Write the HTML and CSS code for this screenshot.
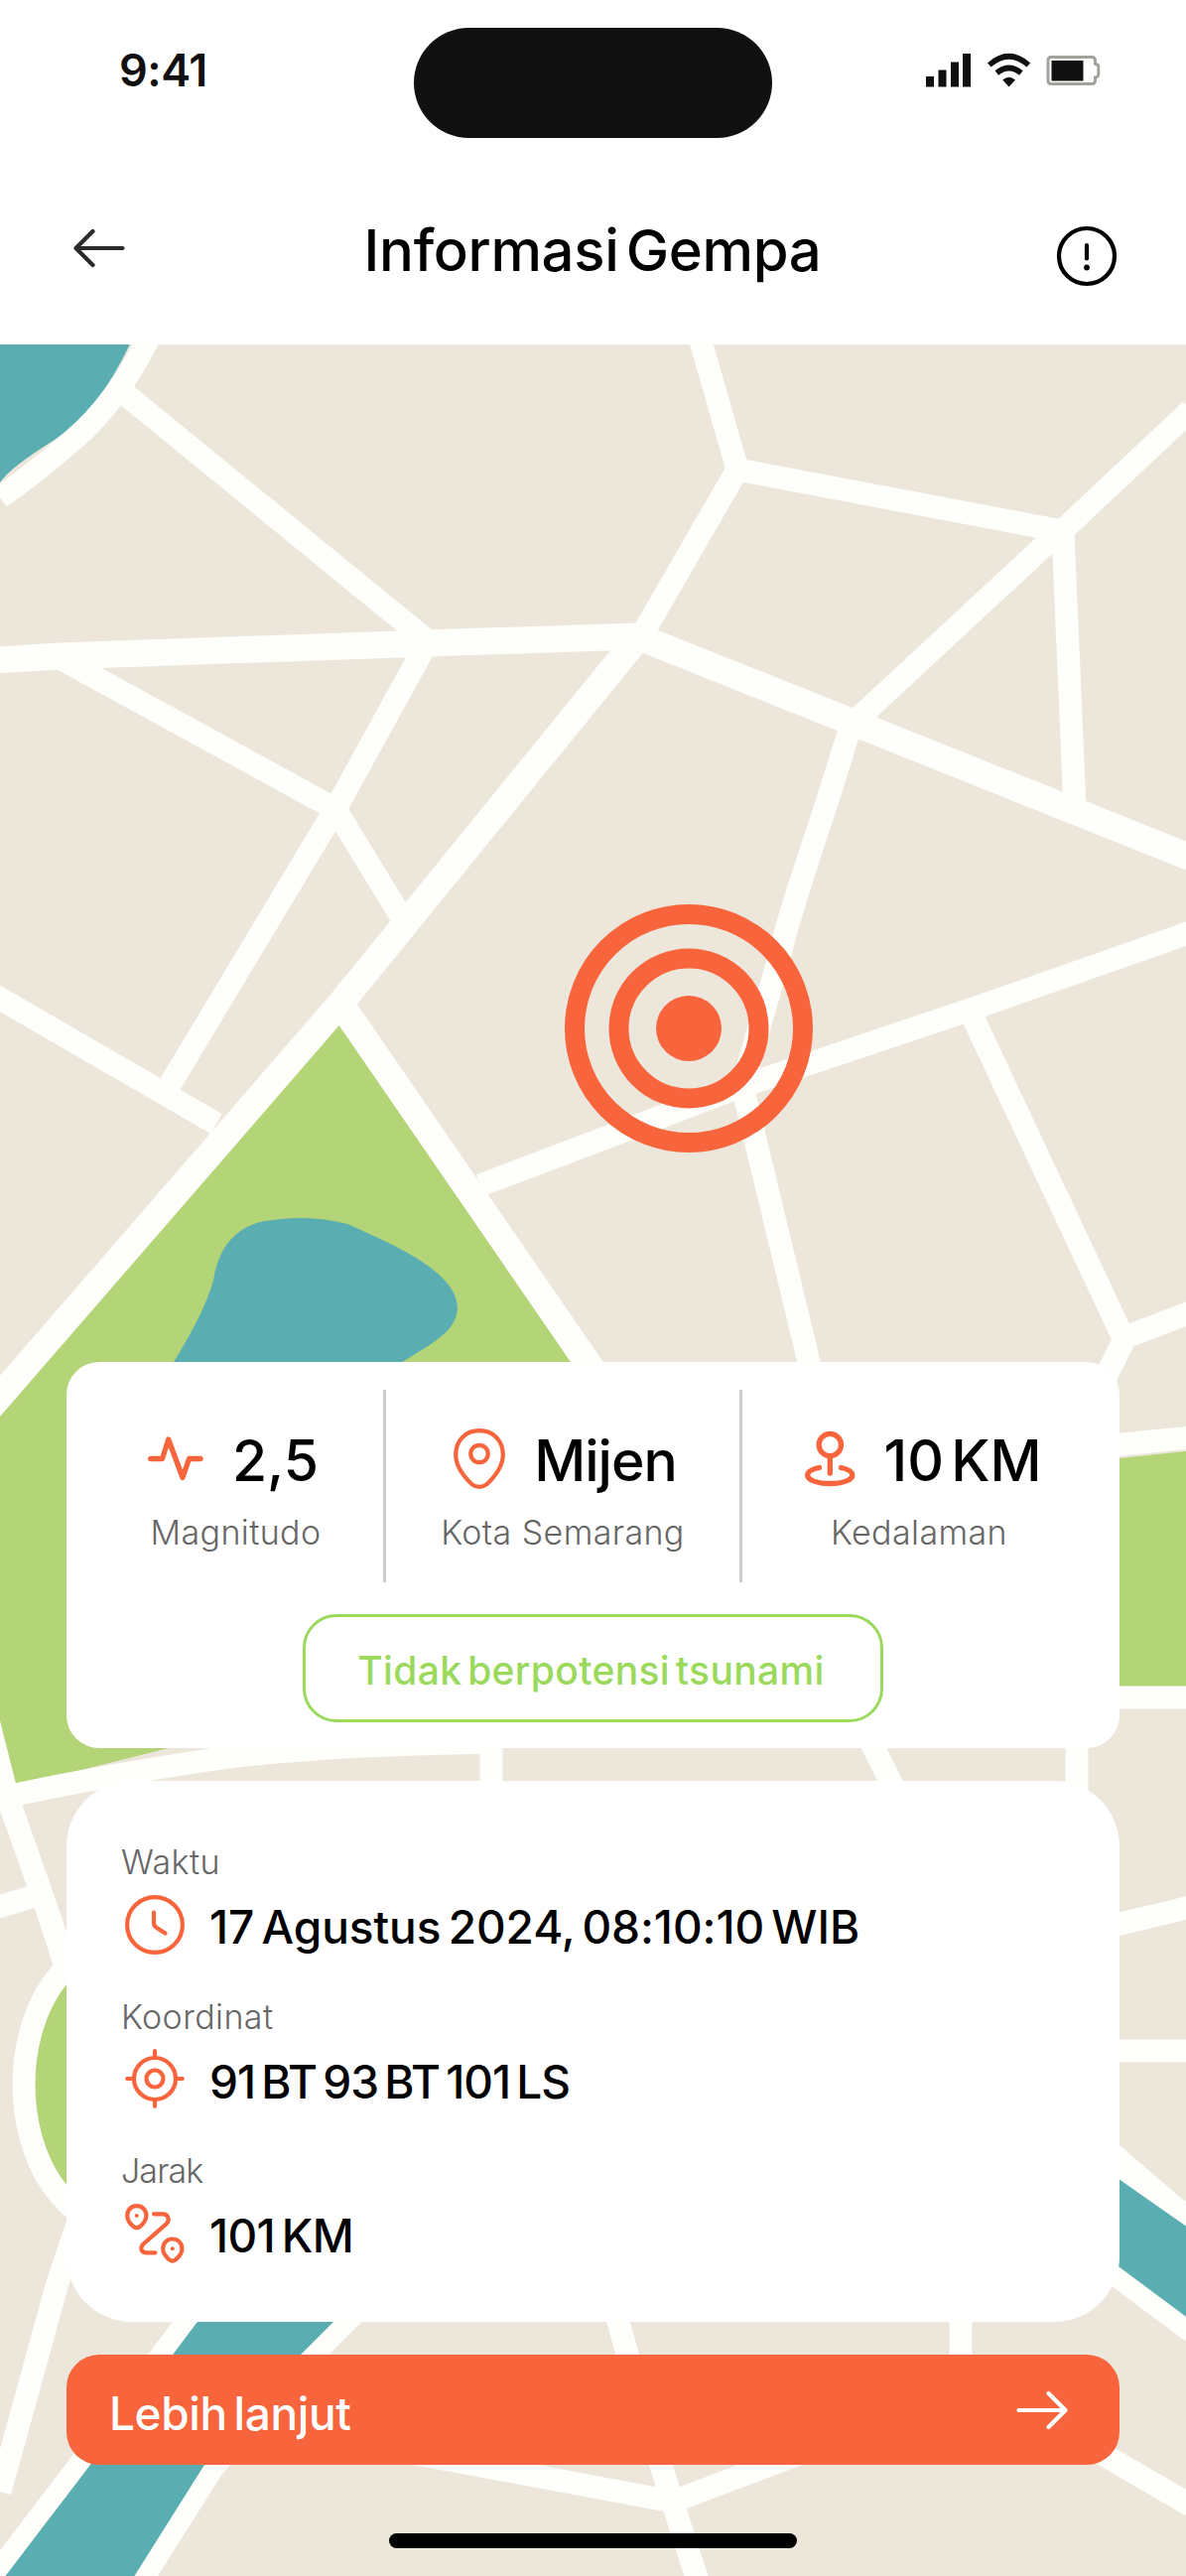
FILE: index.html
```html
<!DOCTYPE html>
<html lang="id">
<head>
<meta charset="utf-8">
<title>Informasi Gempa</title>
<link rel="stylesheet" href="styles.css">
</head>
<body>
<div class="screen">
  <div class="status-bar">
    <span class="time">9:41</span>
    <div class="island"></div>
    <svg class="status-icons" width="178" height="36" viewBox="0 0 178 36" fill="#101010">
      <path d="M1 24h8v10.500H1zM13.500 17.500h8v17h-8zM26 9.500h8v25h-8zM38 1h8v33.500h-8z"/>
      <path d="M84.600 34.500 78.200 27.500Q84.600 22 91 27.500Z"/>
      <g fill="none" stroke="#101010" stroke-width="5.600">
        <path d="M64.800 12.500Q84.600-5 104.400 12.500"/>
        <path d="M72.300 20.500Q84.600 10.500 96.900 20.500"/>
      </g>
      <path fill="none" stroke="#a3a39e" stroke-width="3" d="M127 4.500H168Q171.500 4.500 171.500 8V11.500Q174.800 12 174.800 14V22Q174.800 24.500 171.500 25V28Q171.500 31.500 168 31.500H127Q124 31.500 124 28V8Q124 4.500 127 4.500Z"/>
      <path d="M127.500 8h32v20.500h-32z"/>
    </svg>
  </div>

  <header class="header">
    <svg class="back" width="52" height="42" viewBox="0 0 52 42" fill="none" stroke="#2b2a2a" stroke-width="4.200" stroke-linecap="round" stroke-linejoin="round"><path d="M49.500 21H2.500M19.500 4 2.500 21l17 17"/></svg>
    <h1 class="title">Informasi Gempa</h1>
    <svg class="info" width="62" height="62" viewBox="0 0 62 62" fill="none" stroke="#000" stroke-width="4.200" stroke-linecap="round"><circle cx="31" cy="31" r="28"/><path d="M31 20v13.500"/><circle cx="31" cy="42.500" r="2.900" fill="#000" stroke="none"/></svg>
  </header>

  <main class="map">
    <svg class="map-art" width="1195" height="2248" viewBox="0 347 1195 2248">
      <rect y="347" width="1195" height="2248" fill="#ede6db"/>
      <path fill="#5aaeb1" d="M0 340H134Q100 415 55 443T0 486Z"/>
      <path fill="#b4d478" d="M341 1022 595 1392 600 1750 174 1760 14 1800 0 1740V1425Z"/>
      <g class="roads">
        <path d="M150 340Q118 405 75 442T0 501"/>
        <path d="M120 392 430 645"/>
        <path class="wide" d="M-5 665 60 661 430 648 642 641 860 728 1200 864"/>
        <path d="M705 340 743 473 1070 535 1200 413M743 473 646 641M1068 535 860 728M1071 535 1083 815"/>
        <path d="M62 664 338 815 405 925M430 648 338 815 168 1098M-5 1003 218 1132"/>
        <path d="M858 728C825 840 800 900 785 965L748 1094 815 1372 850 1500"/>
        <path d="M484 1194 748 1094 975 1018 1200 939M978 1020 1132 1348M1110 1395 1134 1347 1200 1322"/>
        <path class="wide" d="M644 641 343 1011-10 1418M343 1011 612 1402"/>
      </g>
      <path fill="#5aaeb1" d="M170 1380Q205 1325 215 1290 222 1242 262 1231 310 1222 350 1233C400 1255 460 1282 461 1317 460 1345 430 1355 385 1385Z"/>
      <path fill="#b4d478" d="M1100 1472 1195 1462V1699H1100Z"/>
      <g class="roads">
        <path d="M1100 1458 1200 1448M1100 1710H1200"/>
        <path d="M-14 1725 8 1812 48 1925M5 1810Q110 1788 210 1773T500 1755M495 1740V1800M870 1740 905 1810M1085 1740V1810M-5 1922 52 1905M48 1925 72 2000"/>
        <path d="M1100 1945 1200 1921M1100 2066H1200"/>
      </g>
      <ellipse cx="122" cy="2100" rx="98" ry="143" fill="#b4d478" stroke="#fefefb" stroke-width="23"/>
      <g class="roads">
        <path d="M80 2235 57 2303 23 2427 0 2510M1100 2152 1200 2238"/>
        <path d="M618 2320 637 2390 678 2522 703 2600M968 2320V2390M420 2472 678 2520 805 2472M1090 2460 1200 2524"/>
      </g>
      <g stroke="#fefefb" stroke-width="40" paint-order="stroke" fill="#5aaeb1">
        <path d="M207 2328 355 2320 280 2395 206 2483 126 2610H-6L91 2483Z"/>
        <path d="M1100 2176 1210 2253V2345L1100 2263Z"/>
      </g>
    </svg>

    <svg class="epicenter" width="252" height="252" viewBox="0 0 252 252" fill="none" stroke="#f8643b" stroke-width="20"><circle cx="126" cy="126" r="115"/><circle cx="126" cy="126" r="70.500"/><circle cx="126" cy="126" r="33" fill="#f8643b" stroke="none"/></svg>

    <section class="card summary">
      <div class="stats">
        <div class="stat magnitude">
          <div class="stat-value">
            <svg width="56" height="50" viewBox="0 0 56 50" class="stroke bold"><path d="M2.700 24.500H14.500L20.700 5 35 43.500 41.500 24.500H53"/></svg>
            <span>2,5</span>
          </div>
          <div class="stat-label">Magnitudo</div>
        </div>
        <div class="stat place">
          <div class="stat-value">
            <svg width="52" height="62" viewBox="0 0 52 62" class="stroke"><path d="M26 2.200C12 2.200 2.200 12 2.200 26.500 2.200 39 11 49 18 55.800Q26 62 34 55.800C41 49 49.800 39 49.800 26.500 49.800 12 40 2.200 26 2.200Z"/><circle cx="26" cy="25.500" r="8.700"/></svg>
            <span>Mijen</span>
          </div>
          <div class="stat-label">Kota Semarang</div>
        </div>
        <div class="stat depth">
          <div class="stat-value">
            <svg width="51" height="57" viewBox="0 0 51 57" class="stroke bold"><circle cx="25.300" cy="14.500" r="11.200"/><path d="M25.300 26V43M14.500 37.500C7 39 2.700 41.500 2.700 45 2.700 50 12.500 53.500 25.300 53.500S47.800 50 47.800 45C47.800 41.500 43.500 39 36.500 37.500"/></svg>
            <span>10 KM</span>
          </div>
          <div class="stat-label">Kedalaman</div>
        </div>
      </div>
      <div class="pill">Tidak berpotensi tsunami</div>
    </section>

    <section class="card details">
      <div class="detail time-row">
        <div class="detail-label">Waktu</div>
        <div class="detail-value">
          <svg width="60" height="60" viewBox="0 0 60 60" class="stroke"><circle cx="30" cy="30" r="27.900"/><path d="M29 17.500V28Q29 31 31.500 32.700L40.500 38.500"/></svg>
          <span>17 Agustus 2024, 08:10:10 WIB</span>
        </div>
      </div>
      <div class="detail coord-row">
        <div class="detail-label">Koordinat</div>
        <div class="detail-value">
          <svg width="60" height="60" viewBox="0 0 60 60" class="stroke"><circle cx="30" cy="30" r="21"/><circle cx="30" cy="30" r="8.500"/><path d="M30 2.200V8M30 52v5.800M2.200 30H8M52 30h5.800"/></svg>
          <span>91 BT 93 BT 101 LS</span>
        </div>
      </div>
      <div class="detail distance-row">
        <div class="detail-label">Jarak</div>
        <div class="detail-value">
          <svg width="60" height="60" viewBox="0 0 60 60" class="stroke"><path id="pin" d="M11.800 2.200C6 2.200 2.200 6.500 2.200 12 2.200 17 5.500 20.500 8.500 23Q11.800 25.500 15 23C18 20.500 21.400 17 21.400 12 21.400 6.500 17.500 2.200 11.800 2.200Z"/><use href="#pin" x="36" y="33.300"/><path d="M29 10.300H38C43.500 10.300 45.500 16.500 41.500 20.300L18.500 40.500C14 45 17 49.300 21.500 49.300H30.500"/><circle cx="11.800" cy="12" r="2" class="dot"/><circle cx="47.800" cy="45.300" r="2" class="dot"/></svg>
          <span>101 KM</span>
        </div>
      </div>
    </section>

    <a class="more">
      <span>Lebih lanjut</span>
      <svg width="52" height="42" viewBox="0 0 52 42" fill="none" stroke="#fff" stroke-width="4.200" stroke-linecap="round" stroke-linejoin="round"><path d="M2.500 21H49.500M32.500 4 49.500 21 32.500 38"/></svg>
    </a>
    <div class="home-indicator"></div>
  </main>
</div>
</body>
</html>
```
FILE: styles.css
```css
* { box-sizing: border-box; margin: 0; }

body {
  background: #fff;
  color: #000;
  font-family: Inter, "Liberation Sans", sans-serif;
}

.screen {
  display: flex;
  flex-direction: column;
  width: 1195px;
  height: 2595px;
  overflow: hidden;
}

.status-bar {
  display: grid;
  grid-template-columns: 1fr 361px 1fr;
  align-items: center;
  height: 166px;
}
.time {
  margin: 0 0 26px 120px;
  font-size: 45px;
  font-weight: 600;
  letter-spacing: -0.500px;
  color: #101010;
}
.island { height: 111px; border-radius: 56px; background: #101010; }
.status-icons { justify-self: end; margin: 0 85px 25px 0; }

.header {
  display: flex;
  align-items: center;
  justify-content: space-between;
  height: 181px;
  padding: 0 69px 10px 74px;
}
.back { margin-bottom: 3px; }
.info { margin-top: 13px; }
.title {
  margin-left: 4px;
  font-size: 58px;
  font-weight: 500;
  line-height: 70px;
  letter-spacing: -0.300px;
  word-spacing: -8px;
}

.map {
  position: relative;
  display: flex;
  flex: 1;
  flex-direction: column;
  gap: 33px;
  padding: 1025px 67px 0;
}
.map-art { position: absolute; inset: 0; }
.roads { fill: none; stroke: #fefefb; stroke-width: 23px; stroke-linejoin: round; }
.wide { stroke-width: 27px; }
.epicenter { position: absolute; left: 568px; top: 563px; }

.card { position: relative; background: #fff; }
.stroke {
  flex: none;
  fill: none;
  stroke: #f8643b;
  stroke-width: 4.200px;
  stroke-linecap: round;
  stroke-linejoin: round;
}
.bold { stroke-width: 5.300px; }
.dot { fill: #f8643b; stroke: none; }

.summary { height: 389px; padding-top: 28px; border-radius: 33px; }
.stats {
  display: grid;
  grid-template-columns: 302px 359px 1fr;
  height: 194px;
  padding: 0 24px 0 17px;
}
.stat { padding-top: 36px; }
.stat + .stat { border-left: 3px solid #ccc; }
.stat-value {
  display: flex;
  align-items: center;
  justify-content: center;
  gap: 29px;
  height: 70px;
  font-size: 57px;
  font-weight: 500;
}
.stat-value svg { margin-bottom: 3px; }
.place .stat-value { padding-left: 5px; letter-spacing: -1px; }
.depth .stat-value { padding-left: 8px; word-spacing: -8px; }
.stat-label {
  margin-top: 16px;
  font-size: 34px;
  font-weight: 350;
  line-height: 44px;
  letter-spacing: 0.400px;
  text-align: center;
  color: #666;
}
.magnitude .stat-label { padding-left: 5px; }
.pill {
  display: flex;
  align-items: center;
  justify-content: center;
  width: 585px;
  height: 109px;
  margin: 32px auto 0;
  padding: 3px 4px 0 0;
  border: 3px solid #9ad95c;
  border-radius: 34px;
  color: #9ad95c;
  font-size: 39px;
  font-weight: 500;
  letter-spacing: 0.350px;
  word-spacing: -5px;
}

.details {
  display: flex;
  flex-direction: column;
  gap: 38.500px;
  height: 545px;
  padding: 60px 55px;
  border-radius: 66px;
}
.detail { height: 117px; }
.detail-label {
  font-size: 34px;
  font-weight: 350;
  line-height: 44px;
  letter-spacing: 0.400px;
  color: #666;
}
.detail-value {
  display: flex;
  align-items: center;
  gap: 25px;
  height: 60px;
  margin-top: 13px;
  padding-left: 4px;
  font-size: 46px;
  font-weight: 500;
  word-spacing: -5px;
}
.detail-value svg { margin-bottom: 5px; }
.time-row .detail-value { letter-spacing: -0.050px; }
.coord-row .detail-value { letter-spacing: -1px; }
.distance-row .detail-value { letter-spacing: -0.600px; }
.distance-row .detail-label { letter-spacing: -0.900px; }

.more {
  position: relative;
  display: flex;
  align-items: center;
  justify-content: space-between;
  height: 111px;
  padding: 6px 52px 0 43px;
  border-radius: 33px;
  background: #f8643b;
  color: #fff;
  font-size: 46px;
  font-weight: 500;
  letter-spacing: -0.400px;
  word-spacing: -5px;
}
.more svg { margin-bottom: 6px; }
.home-indicator {
  position: relative;
  width: 411px;
  height: 15px;
  margin: 36px auto 0;
  border-radius: 8px;
  background: #000;
}
```
